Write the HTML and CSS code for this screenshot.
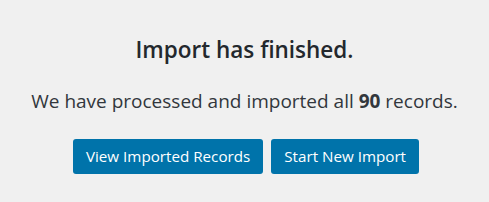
FILE: index.html
```html
<!DOCTYPE html>
<html lang="en">
<head>
  <meta charset="UTF-8">
  <title>Import Finished</title>
  <link rel="stylesheet" href="styles.css">
</head>
<body>

  <div class="import-done">
    <h2>Import has finished.</h2>
    <p>We have processed and imported all <strong>90</strong> records.</p>
    <div class="actions">
      <a class="button" href="#">View Imported Records</a>
      <a class="button" href="#">Start New Import</a>
    </div>
  </div>

</body>
</html>
```

FILE: styles.css
```css
body {
  background-color: #f0f0f0;
  color: #32373c;
  font-family: "Open Sans", sans-serif;
  margin: 0;
  padding: 0;
}

.import-done {
  display: flex;
  flex-direction: column;
  align-items: center;
  padding-top: 36px;
}

.import-done h2 {
  font-size: 22.5px;
  font-weight: 600;
  line-height: 28px;
  margin: 0;
  color: #23282d;
}

.import-done p {
  font-size: 19px;
  line-height: 26px;
  margin: 24px 0 0;
}

.import-done strong {
  font-weight: 700;
}

.actions {
  display: flex;
  gap: 8px;
  margin-top: 25px;
  padding-left: 3px;
}

.button {
  background-color: #0073aa;
  color: #fff;
  text-decoration: none;
  font-size: 15.2px;
  line-height: 35px;
  height: 35px;
  padding: 0 13px;
  border-radius: 3px;
}
```
